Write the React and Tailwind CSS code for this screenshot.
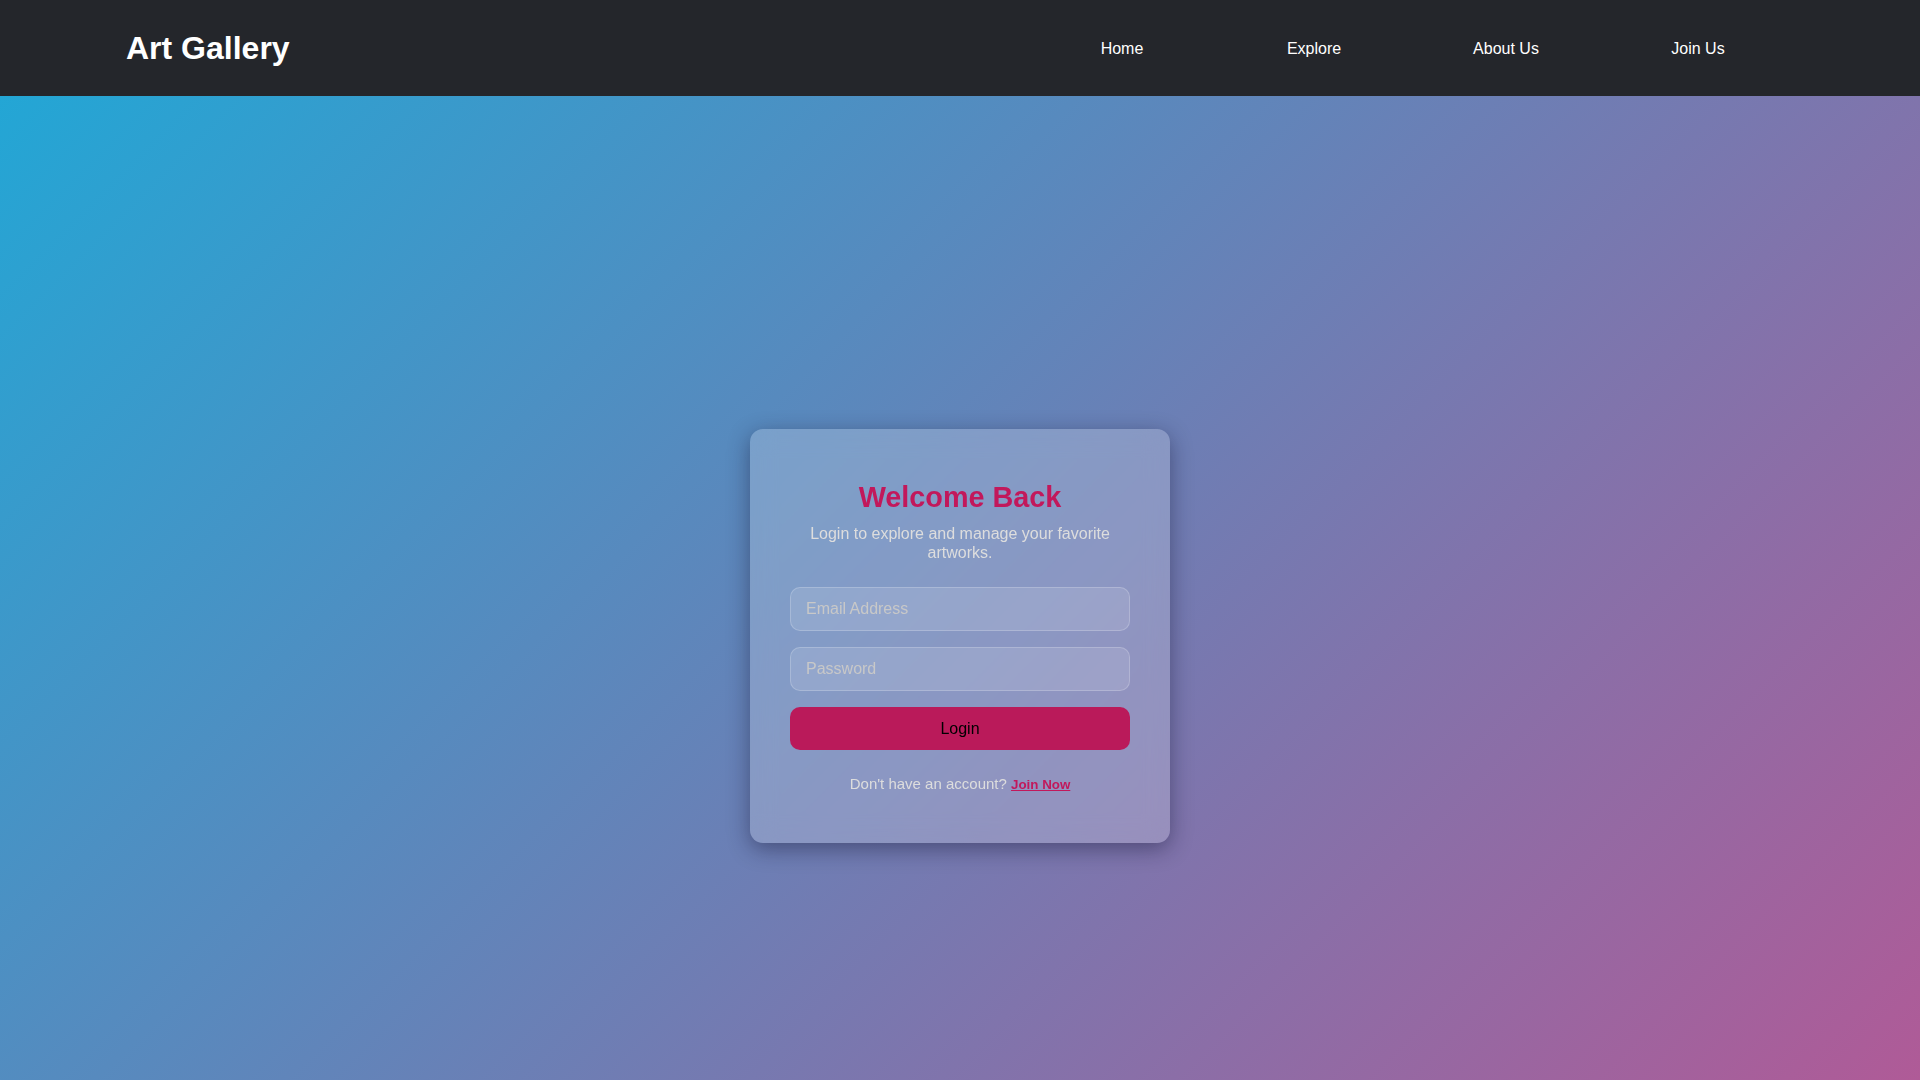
import React from 'react';

const links = ['Home', 'Explore', 'About Us', 'Join Us'];

const App = () => {
  return (
    <div className="h-screen overflow-hidden font-['Liberation_Sans',Arial,sans-serif]">
      {/* Header */}
      <header className="h-[96px] bg-[#24262b] flex items-center justify-between px-[126px]">
        <h1 className="text-white text-[32px] leading-[37px] font-bold">Art Gallery</h1>
        <nav className="flex pt-[2px]">
          {links.map((l) => (
            <a key={l} href="#" className="w-[192px] text-center text-white text-[16px] leading-[18px]">
              {l}
            </a>
          ))}
        </nav>
      </header>

      {/* Main */}
      <main className="h-screen flex items-center justify-center bg-[linear-gradient(135deg,#23a6d5,#b45895)]">
        <div className="w-[420px] px-10 pt-[52px] pb-[50px] rounded-[13px] bg-white/20 backdrop-blur-md shadow-[0_6px_22px_rgba(20,20,50,0.45)] text-center">
          <h2 className="text-[#c2185b] text-[28.8px] leading-[33px] font-bold">Welcome Back</h2>
          <p className="mt-[10px] text-[#ddd] text-[16px] leading-[19px]">
            Login to explore and manage your favorite artworks.
          </p>
          <form className="mt-[25px] flex flex-col gap-4" onSubmit={(e) => e.preventDefault()}>
            <input
              type="email"
              placeholder="Email Address"
              className="h-[44px] w-full px-[15px] rounded-[10px] border border-white/20 bg-white/[0.12] text-[16px] text-white placeholder:text-[#c8c8c8] outline-none"
            />
            <input
              type="password"
              placeholder="Password"
              className="h-[44px] w-full px-[15px] rounded-[10px] border border-white/20 bg-white/[0.12] text-[16px] text-white placeholder:text-[#c8c8c8] outline-none"
            />
            <button type="submit" className="h-[43px] w-full rounded-[10px] bg-[#ba1a5a] text-black text-[16px]">
              Login
            </button>
          </form>
          <p className="mt-[25px] text-[#ddd] text-[15px] leading-[17px]">
            Don't have an account?{' '}
            <a href="#" className="text-[#c2185b] text-[13.333px] font-bold underline">
              Join Now
            </a>
          </p>
        </div>
      </main>
    </div>
  );
};

export default App;
